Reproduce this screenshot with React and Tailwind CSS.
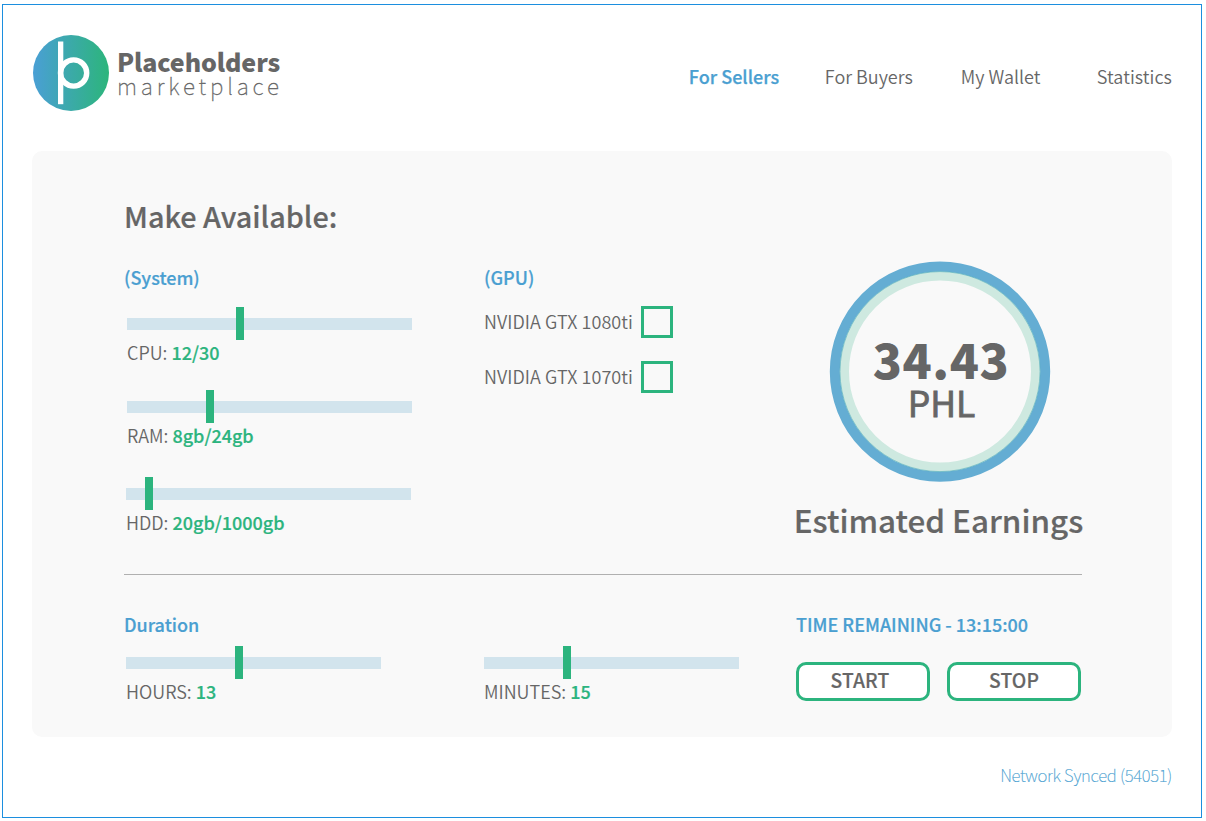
function Logo() {
  return (
    <svg width="76" height="76" viewBox="0 0 76 76" className="shrink-0">
      <defs>
        <linearGradient id="brand" x1="0" y1="0" x2="1" y2="0">
          <stop offset="0" stopColor="#4a9fd5" />
          <stop offset="1" stopColor="#2cb57b" />
        </linearGradient>
      </defs>
      <circle cx="38" cy="38" r="38" fill="url(#brand)" />
      <rect x="25" y="6.5" width="5.3" height="62.7" fill="#fff" />
      <circle cx="40.6" cy="38" r="13.1" fill="none" stroke="#fff" strokeWidth="5.4" />
    </svg>
  );
}

function Slider({ label, value, track, handle }) {
  return (
    <div>
      <div className={`relative flex h-[33px] items-center ${track}`}>
        <div className="h-3 w-full bg-[#d2e4ed]" />
        <div className={`absolute top-0 h-[33px] w-2 bg-[#2cb47e] ${handle}`} />
      </div>
      <div className="h-6 leading-6 whitespace-nowrap">
        <span className="font-[350]">{label}</span>{" "}
        <span className="font-medium text-[#2cb47e] [-webkit-text-stroke:0.2px]">{value}</span>
      </div>
    </div>
  );
}

function Gpu({ name }) {
  return (
    <label className="flex h-8 items-center">
      <span className="w-[157px] pb-0.5 leading-6 font-[350] tracking-[0.05px] whitespace-nowrap">{name}</span>
      <span className="size-8 border-3 border-[#2cb47e]" />
    </label>
  );
}

function Heading({ children }) {
  return (
    <h2 className="h-6 leading-6 font-medium whitespace-nowrap text-[#4a9fd1] [-webkit-text-stroke:0.2px]">
      {children}
    </h2>
  );
}

function ActionButton({ children, pad }) {
  return (
    <button
      className={`h-[39px] w-[134px] rounded-[10px] border-3 border-[#2cb47e] bg-white pb-[3px] text-[19.3px] leading-6 font-medium tracking-[0.1px] [-webkit-text-stroke:0.15px] ${pad}`}
    >
      {children}
    </button>
  );
}

export default function App() {
  return (
    <div className="h-[821px] w-[1206px] bg-white pt-1 pl-0.5 font-['Noto_Sans_CJK_SC',sans-serif] text-[18px] text-[#666]">
      <div className="flex h-[814px] w-[1200px] flex-col border border-[#1c8fdf] px-[29px]">
        <header className="flex h-[146px] shrink-0 justify-between">
          <div className="flex pt-[30px] pl-px">
            <Logo />
            <div className="pt-[13px] pl-2">
              <div className="text-[25px] leading-[26px] font-black tracking-[-0.1px] whitespace-nowrap">
                Placeholders
              </div>
              <div className="text-[22.5px] leading-[23px] font-thin tracking-[3.85px] whitespace-nowrap [-webkit-text-stroke:0.3px]">
                marketplace
              </div>
            </div>
          </div>
          <nav className="flex pt-[59px] leading-6 font-[350] whitespace-nowrap">
            <a className="w-[136px] font-medium text-[#4a9fd1] [-webkit-text-stroke:0.25px]">For Sellers</a>
            <a className="w-[136px]">For Buyers</a>
            <a className="w-[136px]">My Wallet</a>
            <a className="tracking-[0.06px]">Statistics</a>
          </nav>
        </header>

        <main className="h-[586px] shrink-0 rounded-[10px] bg-[#f9f9f9] pt-[45px] pl-[92px]">
          <h1 className="h-10 text-[28.8px] leading-10 font-medium [-webkit-text-stroke:0.2px]">Make Available:</h1>

          <div className="mt-[25px] grid h-[313px] grid-cols-[360px_311px_289px]">
            <section className="pt-1">
              <Heading>(System)</Heading>
              <div className="mt-[18px] pl-[3px]">
                <Slider label="CPU:" value="12/30" track="w-[285px]" handle="left-[109px]" />
              </div>
              <div className="mt-[26px] pl-[3px]">
                <Slider label="RAM:" value="8gb/24gb" track="w-[285px]" handle="left-[79px]" />
              </div>
              <div className="mt-[30px] pl-0.5">
                <Slider label="HDD:" value="20gb/1000gb" track="w-[285px]" handle="left-[19px]" />
              </div>
            </section>

            <section className="pt-1">
              <Heading>(GPU)</Heading>
              <div className="mt-[17px] flex flex-col gap-[23px]">
                <Gpu name="NVIDIA GTX 1080ti" />
                <Gpu name="NVIDIA GTX 1070ti" />
              </div>
            </section>

            <section className="flex flex-col items-center">
              <div className="relative flex size-[221px] flex-col items-center">
                <svg width="222" height="222" viewBox="0 0 222 222" className="absolute top-0 left-0 max-w-none">
                  <circle cx="111" cy="110.6" r="95.7" fill="none" stroke="#cee9e0" strokeWidth="9.4" />
                  <circle cx="111" cy="110.6" r="105.2" fill="none" stroke="#64add3" strokeWidth="10" />
                  <circle cx="111" cy="110.6" r="100" fill="none" stroke="#55b0ba" strokeWidth="0.6" />
                </svg>
                <div className="relative mt-[72px] pl-[3px] text-[48px] leading-[50px] font-black tracking-[0.5px]">
                  34.43
                </div>
                <div className="relative pl-1 text-[35.5px] leading-[38px] [-webkit-text-stroke:0.8px]">PHL</div>
              </div>
              <div className="mt-[17px] pr-[2px] text-[31.4px] leading-[42px] font-medium whitespace-nowrap [-webkit-text-stroke:0.2px]">
                Estimated Earnings
              </div>
            </section>
          </div>

          <div className="h-px w-[958px] bg-[#b0b0b0]" />

          <div className="mt-[37px] grid grid-cols-[360px_312px_288px]">
            <section>
              <Heading>Duration</Heading>
              <div className="mt-2.5 pl-0.5">
                <Slider label="HOURS:" value="13" track="w-[255px]" handle="left-[109px]" />
              </div>
            </section>
            <section className="pt-[34px]">
              <Slider label="MINUTES:" value="15" track="w-[255px]" handle="left-[79px]" />
            </section>
            <section>
              <Heading>TIME REMAINING - 13:15:00</Heading>
              <div className="mt-[26px] flex gap-[17px]">
                <ActionButton pad="pr-[6px]">START</ActionButton>
                <ActionButton pad="pr-0">STOP</ActionButton>
              </div>
            </section>
          </div>
        </main>

        <footer className="mt-[26px] text-right text-[16.8px] leading-6 font-thin tracking-[-0.25px] text-[#4a9fd1] [-webkit-text-stroke:0.2px]">
          Network Synced (54051)
        </footer>
      </div>
    </div>
  );
}
